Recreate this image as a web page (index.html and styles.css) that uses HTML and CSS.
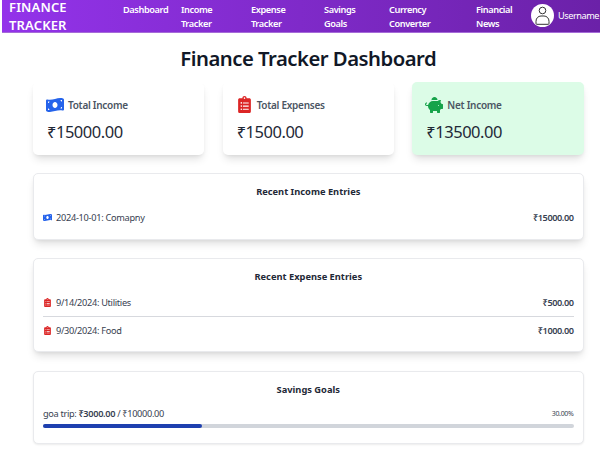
FILE: index.html
```html
<!DOCTYPE html>
<html lang="en">
<head>
<meta charset="utf-8">
<title>Finance Tracker Dashboard</title>
<link rel="stylesheet" href="styles.css">
</head>
<body>
<svg class="defs" width="0" height="0" aria-hidden="true">
  <symbol id="money" viewBox="0 0 576 512"><path fill-rule="evenodd" d="M0 112.500V422.300c0 18 10.100 35 27 41.300 87 32.500 174 10.300 261-11.900 79.800-20.300 159.600-40.700 239.300-18.900 23 6.300 48.700-9.500 48.700-33.400V89.700c0-18-10.100-35-27-41.300C462 15.900 375 38.100 288 60.300 208.200 80.600 128.400 100.900 48.700 79.100 25.600 72.800 0 88.600 0 112.500zM288 352c-44.200 0-80-43-80-96s35.800-96 80-96 80 43 80 96-35.800 96-80 96zM64 368c26 0 48 22 48 48H64v-48zM64 192v-48h48c0 26-22 48-48 48zM512 320v48h-48c0-26 22-48 48-48zM464 96h48v48c-26 0-48-22-48-48z"/></symbol>
  <symbol id="clip" viewBox="0 0 384 512"><path fill-rule="evenodd" d="M336 64h-80c0-35.300-28.700-64-64-64s-64 28.700-64 64H48C21.500 64 0 85.500 0 112v352c0 26.500 21.500 48 48 48h288c26.500 0 48-21.500 48-48V112c0-26.500-21.500-48-48-48zM96 424a24 24 0 1 1 0-48 24 24 0 0 1 0 48zM96 328a24 24 0 1 1 0-48 24 24 0 0 1 0 48zM96 232a24 24 0 1 1 0-48 24 24 0 0 1 0 48zM192 40a24 24 0 1 1 0 48 24 24 0 0 1 0-48zM152 384h160a8 8 0 0 1 8 8v16a8 8 0 0 1-8 8H152a8 8 0 0 1-8-8v-16a8 8 0 0 1 8-8zM152 288h160a8 8 0 0 1 8 8v16a8 8 0 0 1-8 8H152a8 8 0 0 1-8-8v-16a8 8 0 0 1 8-8zM152 192h160a8 8 0 0 1 8 8v16a8 8 0 0 1-8 8H152a8 8 0 0 1-8-8v-16a8 8 0 0 1 8-8z"/></symbol>
  <symbol id="pig" viewBox="0 0 576 512"><path fill-rule="evenodd" d="M560 224h-29.500c-8.800-20-21.600-37.700-37.400-52.500L512 96h-32c-29.400 0-55.400 13.500-73 34.300-7.600-1.100-15.100-2.300-23-2.300H256c-77.400 0-141.900 55-156.800 128H56c-14.800 0-26.500-13.500-23.500-28.800C34.700 215.800 45.400 208 57 208h1c3.300 0 6-2.700 6-6v-20c0-3.300-2.700-6-6-6-28.500 0-53.900 20.400-57.500 48.600C-3.900 258.800 22.700 288 56 288h40c0 52.200 25.400 98.100 64 127.300V496c0 8.800 7.200 16 16 16h64c8.800 0 16-7.200 16-16v-48h128v48c0 8.800 7.200 16 16 16h64c8.800 0 16-7.200 16-16v-80.700c11.800-8.900 22.300-19.400 31.300-31.300H560c8.800 0 16-7.200 16-16V240c0-8.800-7.200-16-16-16zM432 256a16 16 0 1 1 0 32 16 16 0 0 1 0-32zM256 96h128c5.400 0 10.700.4 15.900.8 0-.3.100-.5.100-.8 0-53-43-96-96-96s-96 43-96 96c0 2.100.5 4.100.6 6.200 15.200-3.900 31-6.200 47.400-6.200z"/></symbol>
</svg>

<header class="navbar">
  <div class="brand">FINANCE TRACKER</div>
  <nav class="links">
    <a>Dashboard</a><a>Income Tracker</a><a>Expense Tracker</a><a>Savings Goals</a><a>Currency Converter</a><a>Financial News</a>
  </nav>
  <div class="user">
    <svg class="avatar" viewBox="0 0 23 23"><circle cx="11.500" cy="11.500" r="11.500" fill="#fff"/><circle cx="11.500" cy="6.500" r="3.300"/><path d="M5 19.500v-2.200c0-3.200 2.300-5.300 5-5.300h3c2.700 0 5 2.100 5 5.300v2.200q0 .8-.8.800H5.800q-.8 0-.8-.8z"/></svg>
    <span>Username</span>
  </div>
</header>

<main class="page">
  <h1>Finance Tracker Dashboard</h1>
  <div class="cards">
    <section class="card">
      <h2><svg class="icon blue"><use href="#money"/></svg><span>Total Income</span></h2>
      <p>₹15000.00</p>
    </section>
    <section class="card">
      <h2><svg class="icon icon-clip red"><use href="#clip"/></svg><span>Total Expenses</span></h2>
      <p>₹1500.00</p>
    </section>
    <section class="card net">
      <h2><svg class="icon green"><use href="#pig"/></svg><span>Net Income</span></h2>
      <p>₹13500.00</p>
    </section>
  </div>

  <section class="panel income">
    <h3>Recent Income Entries</h3>
    <div class="row"><svg class="mini blue"><use href="#money"/></svg><span class="company">2024-10-01: Comapny</span><b>₹15000.00</b></div>
  </section>

  <section class="panel expense">
    <h3>Recent Expense Entries</h3>
    <div class="row"><svg class="mini red"><use href="#clip"/></svg><span>9/14/2024: Utilities</span><b>₹500.00</b></div>
    <div class="row"><svg class="mini red"><use href="#clip"/></svg><span>9/30/2024: Food</span><b>₹1000.00</b></div>
  </section>

  <section class="panel goals">
    <h3>Savings Goals</h3>
    <div class="goal"><span>goa trip: <strong>₹3000.00</strong> / ₹10000.00</span><small>30.00%</small></div>
    <div class="bar"><div class="fill" style="width:30%"></div></div>
  </section>
</main>
</body>
</html>
```

FILE: styles.css
```css
* { box-sizing: border-box; }
body {
  margin: 0;
  height: 449px;
  overflow: hidden;
  background: #fff;
  color: #374151;
  font-family: "Noto Sans", "Open Sans", sans-serif;
}
h1, h2, h3, p { margin: 0; }
.defs { display: block; height: 0; }

.navbar {
  display: flex;
  height: 33px;
  margin: 0 0 0 2px;
  color: #fff;
  background: linear-gradient(90deg, #9333ea, #6b21a8);
  border-bottom: 1px solid #a56bd8;
}
.brand {
  flex: none;
  width: 121px;
  padding: 0 48px 0 7px;
  margin-top: -2px;
  font-size: 13px;
  line-height: 18px;
  font-weight: 600;
  letter-spacing: 0.150px;
}
.links {
  display: grid;
  flex: none;
  grid-template-columns: 58px 70px 73px 65px 87px 52px;
  align-items: start;
  padding-top: 3px;
  font-size: 9.200px;
  line-height: 13.500px;
  font-weight: 600;
  letter-spacing: -0.400px;
}
.links a { padding-right: 12px; }
.user {
  display: flex;
  flex: none;
  align-items: center;
  gap: 4px;
  height: 31px;
  margin-left: 3px;
  font-size: 9.200px;
  letter-spacing: -0.450px;
}
.avatar {
  flex: none;
  width: 23px;
  height: 23px;
  fill: none;
  stroke: #333;
  stroke-width: 1;
}
.avatar circle:first-child { stroke: none; }

.page { padding: 0 16.500px 0 33px; }
h1 {
  margin-top: 12px;
  height: 37px;
  color: #111827;
  font-size: 20.300px;
  line-height: 27px;
  font-weight: 600;
  letter-spacing: -0.500px;
  text-align: center;
}
.cards {
  display: grid;
  grid-template-columns: repeat(3, 1fr);
  gap: 18.500px;
  margin-bottom: 18px;
}
.card {
  height: 73px;
  padding: 13px 14px;
  border-radius: 5px;
  background: #fff;
  box-shadow: 0 6px 9px -2px rgb(0 0 0 / .12), 0 2px 4px -2px rgb(0 0 0 / .1);
}
.net { background: #dcfce7; }
.card h2 {
  display: flex;
  align-items: center;
  gap: 4px;
  height: 19px;
  margin-left: -1px;
  color: #4b5563;
  font-size: 10px;
  font-weight: 600;
  letter-spacing: -0.280px;
}
.icon { width: 18px; height: 16px; fill: currentColor; }
.icon-clip { width: 17px; height: 17px; }
.blue { color: #2563eb; }
.red { color: #dc2626; }
.green { color: #16a34a; }
.card p {
  margin-top: 6px;
  color: #1f2937;
  font-size: 16.500px;
  line-height: 24px;
  letter-spacing: -0.480px;
}

.panel {
  padding: 9px 9px 0;
  border: 1px solid #e9eaed;
  border-radius: 5px;
  background: #fff;
  box-shadow: 0 6px 9px -2px rgb(0 0 0 / .12), 0 2px 4px -2px rgb(0 0 0 / .1);
}
.income { height: 67px; margin-bottom: 18px; }
.expense { height: 94px; margin-bottom: 19px; }
.goals { height: 73px; box-shadow: 0 1px 2px rgb(0 0 0 / .08); }
.panel h3 {
  height: 19px;
  color: #1f2937;
  font-size: 9.300px;
  line-height: 18px;
  font-weight: 700;
  text-align: center;
}
.row {
  display: flex;
  align-items: center;
  height: 28px;
  margin-top: 1px;
  font-size: 9.200px;
  letter-spacing: -0.300px;
}
.company { letter-spacing: -0.280px; }
.row + .row { margin-top: 0; border-top: 1px solid #d7d9de; }
.row b { margin-left: auto; font-weight: 600; letter-spacing: -0.450px; }
.mini { width: 9px; height: 9px; margin-right: 4px; fill: currentColor; }
.goal {
  display: flex;
  justify-content: space-between;
  align-items: center;
  height: 24px;
  padding-top: 3px;
  font-size: 9.200px;
  letter-spacing: -0.330px;
}
.goal strong { font-weight: 600; }
.goal small { font-size: 7px; }
.bar {
  height: 4px;
  border-radius: 2px;
  background: #d1d5db;
}
.fill { height: 4px; border-radius: 2px; background: #1e40af; }
```
